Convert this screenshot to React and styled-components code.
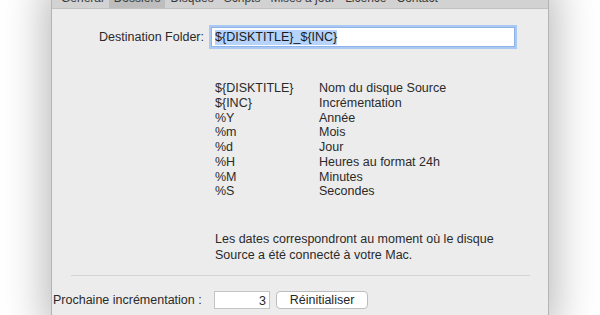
import styled, { createGlobalStyle } from "styled-components";

const GlobalStyle = createGlobalStyle`
  html, body {
    margin: 0;
    padding: 0;
    background: #ffffff;
    overflow: hidden;
  }
  body {
    font-family: "Liberation Sans", Arial, sans-serif;
    color: #2a2a2a;
  }
`;

const tabs = ["Général", "Dossiers", "Disques", "Scripts", "Mises à jour", "Licence", "Contact"];

const variables = [
  ["${DISKTITLE}", "Nom du disque Source"],
  ["${INC}", "Incrémentation"],
  ["%Y", "Année"],
  ["%m", "Mois"],
  ["%d", "Jour"],
  ["%H", "Heures au format 24h"],
  ["%M", "Minutes"],
  ["%S", "Secondes"],
];

export default function App() {
  return (
    <>
      <GlobalStyle />
      <Page>
        <Window>
          <TabBar>
            {tabs.map((t) => (
              <Tab key={t} $active={t === "Dossiers"}>{t}</Tab>
            ))}
          </TabBar>
          <Content>
            <FolderRow>
              <Label>Destination Folder:</Label>
              <FocusField>
                <Selected>{"${DISKTITLE}_${INC}"}</Selected>
              </FocusField>
            </FolderRow>
            <VarList>
              {variables.map(([key, desc]) => (
                <VarRow key={key}>
                  <span>{key}</span>
                  <span>{desc}</span>
                </VarRow>
              ))}
            </VarList>
            <Note>
              Les dates correspondront au moment où le disque
              <br />
              Source a été connecté à votre Mac.
            </Note>
            <Separator />
            <CounterRow>
              <span>Prochaine incrémentation :</span>
              <NumberField>3</NumberField>
              <ResetButton>Réinitialiser</ResetButton>
            </CounterRow>
          </Content>
        </Window>
      </Page>
    </>
  );
}

const Page = styled.div`
  width: 600px;
  height: 315px;
  overflow: hidden;
`;

const Window = styled.div`
  width: 496px;
  height: 340px;
  margin-left: 51px;
  margin-top: -13px;
  background: #ececec;
  border-left: 1px solid #b4b4b4;
  border-right: 1px solid #b4b4b4;
  box-shadow: 0 0 40px 6px rgba(0, 0, 0, 0.28);
`;

const TabBar = styled.div`
  display: flex;
  height: 21px;
  padding-left: 4px;
  background: #d2d2d2;
  border-bottom: 1px solid #c2c2c2;
`;

const Tab = styled.div`
  display: flex;
  align-items: center;
  padding: 0 5px;
  height: 100%;
  font-size: 12px;
  color: #3a3a3a;
  background: ${(p) => (p.$active ? "#bdbdbd" : "transparent")};
`;

const Content = styled.div`
  display: flex;
  flex-direction: column;
  font-size: 12.5px;
`;

const FolderRow = styled.div`
  display: flex;
  align-items: center;
  margin-top: 18px;
`;

const Label = styled.span`
  width: 152px;
  text-align: right;
  margin-right: 7px;
`;

const FocusField = styled.div`
  display: flex;
  align-items: center;
  width: 296px;
  height: 18px;
  padding: 0 3px;
  background: #ffffff;
  border: 1px solid #8fb3e8;
  box-shadow: 0 0 0 2px #a9c8f2;
`;

const Selected = styled.span`
  background: #b5d3fb;
  color: #1a1a1a;
  line-height: 15px;
`;

const VarList = styled.div`
  display: flex;
  flex-direction: column;
  margin: 34px 0 0 163px;
`;

const VarRow = styled.div`
  display: grid;
  grid-template-columns: 104px auto;
  line-height: 14.75px;
`;

const Note = styled.p`
  margin: 32px 0 0 163px;
  line-height: 16px;
`;

const Separator = styled.div`
  height: 1px;
  margin: 12px 18px 0 19px;
  background: #d4d4d4;
`;

const CounterRow = styled.div`
  display: flex;
  align-items: center;
  margin-top: 15px;
  padding-left: 1px;

  > span {
    width: 160px;
  }
`;

const NumberField = styled.div`
  width: 51px;
  height: 16px;
  padding-right: 3px;
  margin-left: 1px;
  text-align: right;
  line-height: 18px;
  background: #ffffff;
  border: 1px solid #c4c4c4;
`;

const ResetButton = styled.button`
  margin-left: 6px;
  width: 92px;
  height: 18px;
  padding: 0;
  font-family: inherit;
  font-size: 12.5px;
  color: #262626;
  background: #ffffff;
  border: 1px solid #bdbdbd;
  border-radius: 4px;
`;
